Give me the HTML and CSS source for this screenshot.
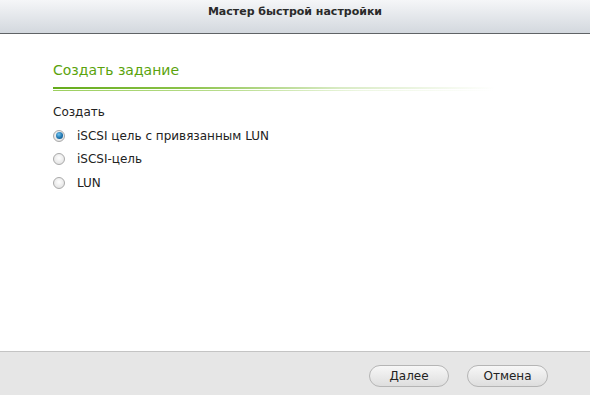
FILE: index.html
```html
<!DOCTYPE html>
<html lang="ru">
<head>
    <meta charset="UTF-8">
    <title>Мастер быстрой настройки</title>
    <link rel="stylesheet" href="styles.css">
</head>
<body>
    <div class="wizard">
        <div class="wizard-header">Мастер быстрой настройки</div>

        <div class="wizard-body">
            <h2 class="section-title">Создать задание</h2>
            <div class="section-rule"></div>

            <div class="field-label">Создать</div>
            <label class="radio-row">
                <input type="radio" name="target" checked>
                <span class="radio-mark"></span>
                <span>iSCSI цель с привязанным LUN</span>
            </label>
            <label class="radio-row">
                <input type="radio" name="target">
                <span class="radio-mark"></span>
                <span>iSCSI-цель</span>
            </label>
            <label class="radio-row">
                <input type="radio" name="target">
                <span class="radio-mark"></span>
                <span>LUN</span>
            </label>
        </div>

        <div class="wizard-footer">
            <button class="btn">Далее</button>
            <button class="btn">Отмена</button>
        </div>
    </div>
</body>
</html>
```

FILE: styles.css
```css
html, body {
    margin: 0;
    padding: 0;
}
body {
    font-family: "DejaVu Sans", Verdana, sans-serif;
    font-size: 12px;
    color: #222;
    background: #fff;
}
.wizard {
    width: 590px;
    height: 395px;
    display: flex;
    flex-direction: column;
}
.wizard-header {
    height: 33px;
    line-height: 24px;
    text-align: center;
    font-weight: bold;
    font-size: 11px;
    color: #2a2a2a;
    background: linear-gradient(#f5f6f8, #d3d8de);
    border-bottom: 1px solid #5f6366;
    flex-shrink: 0;
}
.wizard-body {
    flex: 1;
    padding: 28px 0 0 53px;
}
.section-title {
    margin: 0;
    font-size: 14px;
    font-weight: normal;
    color: #5aa30c;
    line-height: 17px;
}
.section-rule {
    width: 442px;
    height: 2px;
    margin-top: 8px;
    background: linear-gradient(to right, #64ab1a, #8cc34a 30%, rgba(160, 205, 110, 0.4) 65%, rgba(255, 255, 255, 0));
    position: relative;
}
.section-rule::after {
    content: "";
    position: absolute;
    left: 0;
    right: 0;
    top: 3px;
    height: 1px;
    background: linear-gradient(to right, #9ccf5e, #b9dd8e 40%, rgba(220, 238, 200, 0.5) 70%, rgba(255, 255, 255, 0));
}
.field-label {
    margin-top: 16px;
    line-height: 14px;
    color: #222;
}
.radio-row {
    display: flex;
    align-items: center;
    height: 23.5px;
    color: #222;
}
.radio-row:first-of-type {
    margin-top: 5px;
}
.radio-row input {
    display: none;
}
.radio-mark {
    width: 10px;
    height: 10px;
    border-radius: 50%;
    border: 1px solid #a9a9a9;
    background: radial-gradient(circle at 50% 40%, #ffffff, #dcdcdc);
    margin-right: 12px;
    position: relative;
}
.radio-row input:checked + .radio-mark::after {
    content: "";
    position: absolute;
    left: 1.5px;
    top: 1.5px;
    width: 7px;
    height: 7px;
    border-radius: 50%;
    background: radial-gradient(circle at 40% 35%, #6fc3f0, #1b6fa8 60%, #0d4f80);
}
.wizard-footer {
    height: 44px;
    flex-shrink: 0;
    background: #e6e6e6;
    border-top: 1px solid #c4c4c4;
    display: flex;
    justify-content: flex-end;
    align-items: flex-start;
    gap: 18px;
    padding: 13px 42px 0 0;
    box-sizing: border-box;
}
.btn {
    width: 80px;
    height: 22px;
    border-radius: 11px;
    border: 1px solid #b5b5b5;
    background: linear-gradient(#f7f7f7, #dedede);
    font-family: "DejaVu Sans", Verdana, sans-serif;
    font-size: 12px;
    color: #222;
    padding: 0;
}
.btn + .btn {
    width: 81px;
}
```
